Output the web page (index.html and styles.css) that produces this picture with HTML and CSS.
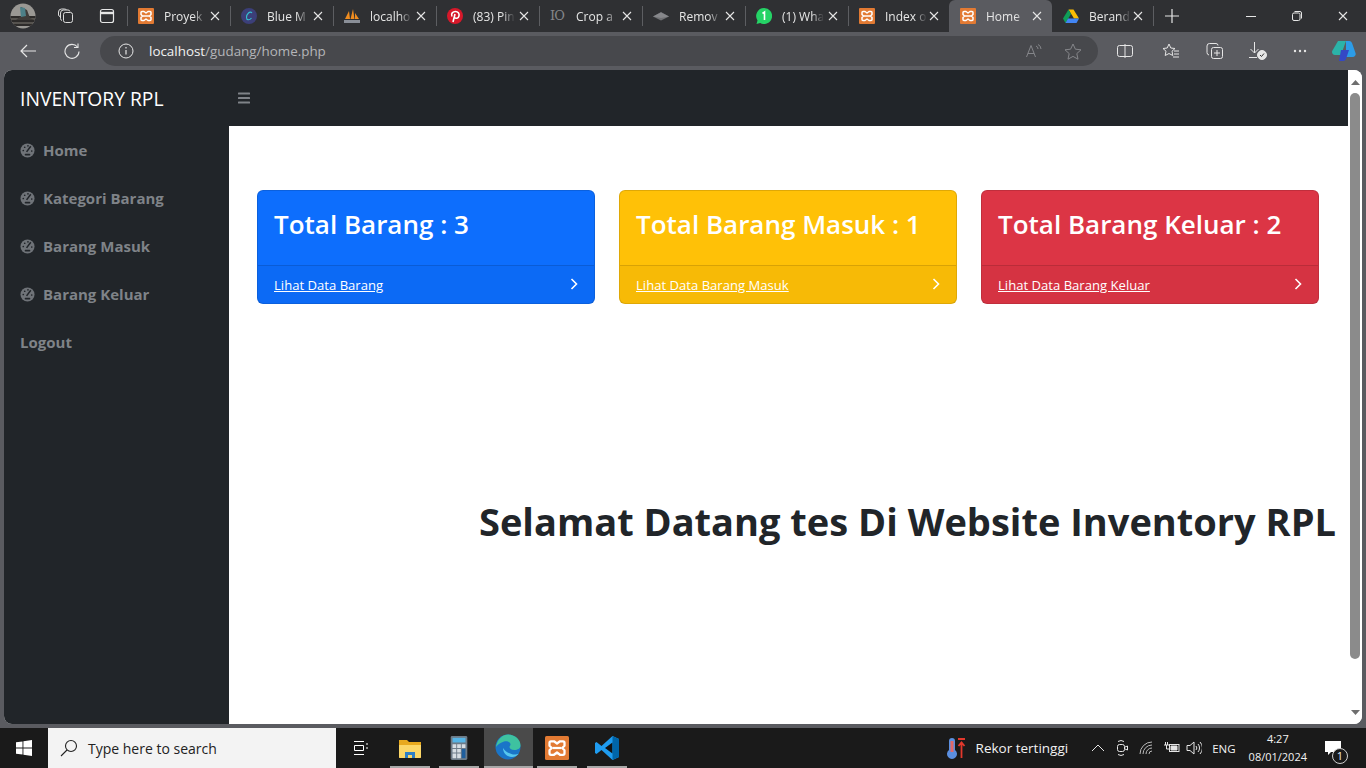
FILE: index.html
```html
<!DOCTYPE html>
<html lang="en">

<head>
    <meta charset="UTF-8" />
    <meta name="viewport" content="width=device-width, initial-scale=1.0" />
    <title>Home</title>

    <link rel="stylesheet" href="styles.css">
</head>

<body>
    <svg class="sprites" width="0" height="0">
        <symbol id="xampp" viewBox="0 0 16 16">
            <rect width="16" height="16" rx="1" fill="#e27a33" />
            <path d="M4 3.500h2L8 5l2-1.500h2a1 1 0 0 1 1 1v2L11.500 8 13 9.500v2a1 1 0 0 1-1 1h-2L8 11l-2 1.500H4a1 1 0 0 1-1-1v-2L4.500 8 3 6.500v-2a1 1 0 0 1 1-1z" fill="none" stroke="#fff" stroke-width="1.500" stroke-linejoin="round" />
            <path d="M5 8h6" stroke="#fff" stroke-width="1.500" />
        </symbol>
        <symbol id="close" viewBox="0 0 10 10">
            <path d="M1 1l8 8M9 1l-8 8" stroke="#e6e6e6" stroke-width="1.100" fill="none" />
        </symbol>
        <symbol id="gauge" viewBox="0 0 16 16">
            <circle cx="8" cy="8" r="7.500" fill="#6f7378" />
            <path d="M7 9.500l4.500-6" stroke="#212529" stroke-width="1.600" />
            <circle cx="3.500" cy="8" r=".9" fill="#212529" />
            <circle cx="5" cy="4.500" r=".9" fill="#212529" />
            <circle cx="8.500" cy="3" r=".9" fill="#212529" />
            <circle cx="12.500" cy="8.500" r=".9" fill="#212529" />
            <rect x="5" y="11.500" width="6" height="1.800" rx=".8" fill="#212529" />
        </symbol>
    </svg>

    <div class="tabstrip">
        <div class="profile">
            <svg width="26" height="26" viewBox="0 0 26 26">
                <clipPath id="avatar"><circle cx="13" cy="13" r="12.500" /></clipPath>
                <g clip-path="url(#avatar)">
                    <rect width="26" height="26" fill="#9a9894" />
                    <path d="M0 13h26v2H0zM0 17h26v2H0zM0 21h26v2H0z" fill="#2d2b2a" />
                    <path d="M0 15h26v2H0zM0 19h26v2H0z" fill="#56534f" />
                    <path d="M11 4l6 3 3 8 4 2H6l5-4z" fill="#3f3c3a" />
                    <path d="M10 4l5 1 1 8-5 1z" fill="#4d8088" />
                </g>
            </svg>
        </div>
        <div class="strip-btn">
            <svg width="18" height="18" viewBox="0 0 18 18" fill="none" stroke="#dcdcdc" stroke-width="1">
                <rect x="6.500" y="5.500" width="9" height="10" rx="2" />
                <path d="M5 13.500A2 2 0 0 1 3.500 11.500V6a3 3 0 0 1 3-3h4.500A2 2 0 0 1 13 4.500" />
                <path d="M3 9.500A2 2 0 0 1 1.500 8V5a3 3 0 0 1 3-3h3A2 2 0 0 1 9.500 3" />
            </svg>
        </div>
        <div class="strip-btn">
            <svg width="16" height="16" viewBox="0 0 16 16" fill="none" stroke="#e6e6e6" stroke-width="1.200">
                <rect x="1.500" y="1.500" width="13" height="13" rx="2" />
                <path d="M1.500 5h13" stroke-width="2.400" />
            </svg>
        </div>

        <div class="tab">
            <svg class="favicon"><use href="#xampp" /></svg>
            <span class="tab-title">Proyek</span>
            <svg class="tab-close"><use href="#close" /></svg>
        </div>
        <div class="tab">
            <svg class="favicon" viewBox="0 0 16 16">
                <circle cx="8" cy="8" r="8" fill="#3c3f79" />
                <path d="M11 5C9 2.500 5.500 6 5.500 9.500c0 3 3 3 5 .5" fill="none" stroke="#35c3d3" stroke-width="1.100" />
            </svg>
            <span class="tab-title">Blue M</span>
            <svg class="tab-close"><use href="#close" /></svg>
        </div>
        <div class="tab">
            <svg class="favicon" viewBox="0 0 16 16">
                <path d="M1 11L5 3l1 8zM6.500 11L9 1l1.500 10zM11 11l0-6 4 6z" fill="#f08c1f" />
                <path d="M0 12h16v3H0z" fill="#8a8f98" />
            </svg>
            <span class="tab-title">localho</span>
            <svg class="tab-close"><use href="#close" /></svg>
        </div>
        <div class="tab">
            <svg class="favicon" viewBox="0 0 16 16">
                <circle cx="8" cy="8" r="8" fill="#d7182a" />
                <path d="M6 14l2-8M5 8.500C3.500 5.500 6 3.500 8.500 3.500s4 2 3.500 4.300c-.5 2.700-3.500 3.200-4.500 1.500" fill="none" stroke="#fff" stroke-width="1.600" />
            </svg>
            <span class="tab-title">(83) Pin</span>
            <svg class="tab-close"><use href="#close" /></svg>
        </div>
        <div class="tab">
            <span class="favicon favicon-text">IO</span>
            <span class="tab-title">Crop a</span>
            <svg class="tab-close"><use href="#close" /></svg>
        </div>
        <div class="tab">
            <svg class="favicon" viewBox="0 0 16 16">
                <path d="M8 4l8 4.500-8 4-8-4z" fill="#6f7074" />
                <path d="M0 8.500l8-4 8 4-8 1.500z" fill="#86878b" />
            </svg>
            <span class="tab-title">Remov</span>
            <svg class="tab-close"><use href="#close" /></svg>
        </div>
        <div class="tab">
            <svg class="favicon" viewBox="0 0 16 16">
                <path d="M8 0a8 8 0 1 1-3.800 15L.5 16l1-3.600A8 8 0 0 1 8 0z" fill="#25d366" />
                <path d="M6.500 5.500L8.500 4v8" fill="none" stroke="#fff" stroke-width="1.600" />
            </svg>
            <span class="tab-title">(1) Wha</span>
            <svg class="tab-close"><use href="#close" /></svg>
        </div>
        <div class="tab">
            <svg class="favicon"><use href="#xampp" /></svg>
            <span class="tab-title">Index o</span>
            <svg class="tab-close"><use href="#close" /></svg>
        </div>
        <div class="tab tab-active">
            <svg class="favicon"><use href="#xampp" /></svg>
            <span class="tab-title">Home</span>
            <svg class="tab-close"><use href="#close" /></svg>
        </div>
        <div class="tab">
            <svg class="favicon" viewBox="0 0 16 16">
                <path d="M5.500 1.500h5L16 10.500h-5z" fill="#fbbc04" />
                <path d="M5.500 1.500L0 10.500 2.500 15 8 6z" fill="#0f9d58" />
                <path d="M2.500 15h11l2.500-4.500H5z" fill="#4285f4" />
            </svg>
            <span class="tab-title">Berand</span>
            <svg class="tab-close"><use href="#close" /></svg>
        </div>

        <div class="new-tab">
            <svg width="14" height="14" viewBox="0 0 14 14">
                <path d="M7 0v14M0 7h14" stroke="#e6e6e6" stroke-width="1.200" />
            </svg>
        </div>

        <div class="window-btns">
            <svg width="10" height="10" viewBox="0 0 10 10"><path d="M0 5.500h10" stroke="#e6e6e6" /></svg>
            <svg width="10" height="10" viewBox="0 0 10 10" fill="none" stroke="#e6e6e6">
                <rect x=".5" y="2" width="7.500" height="7.500" rx="1.500" />
                <path d="M2.500 .5h5.500a1.500 1.500 0 0 1 1.500 1.500v5.500" />
            </svg>
            <svg width="10" height="10"><use href="#close" /></svg>
        </div>
    </div>

    <div class="toolbar">
        <svg class="tool-back" width="16" height="14" viewBox="0 0 16 14" fill="none" stroke="#e6e6e6" stroke-width="1.200">
            <path d="M16 7H1M7 1L1 7l6 6" />
        </svg>
        <svg class="tool-reload" width="16" height="16" viewBox="0 0 16 16" fill="none" stroke="#e6e6e6" stroke-width="1.100">
            <path d="M13.500 4A7 7 0 1 0 15 8.500" />
            <path d="M14 .5V4.500h-4" />
        </svg>
        <div class="address">
            <svg width="16" height="16" viewBox="0 0 16 16" fill="none" stroke="#e6e6e6">
                <circle cx="8" cy="8" r="7" />
                <path d="M8 7v4.500M8 4v1.500" stroke-width="1.200" />
            </svg>
            <span class="url"><b>localhost</b>/gudang/home.php</span>
            <span class="spacer"></span>
            <svg width="16" height="14" viewBox="0 0 16 14" fill="none" stroke="#85868a" stroke-width="1">
                <path d="M0.500 13L5 1.500 9.500 13M2 9.500h6M10 2a3 3 0 0 1 2 3M12 .5a5 5 0 0 1 3 4.500" />
            </svg>
            <svg class="addr-star" width="18" height="17" viewBox="0 0 18 17" fill="none" stroke="#85868a" stroke-width="1">
                <path d="M9 1l2.400 5.200 5.600.6-4.200 3.800 1.200 5.600L9 13.400 4 16.200l1.200-5.600L1 6.800l5.600-.6z" />
            </svg>
        </div>
        <div class="tool-icons">
            <svg width="16" height="14" viewBox="0 0 16 14" fill="none" stroke="#e6e6e6">
                <rect x=".5" y="1.500" width="15" height="11" rx="2" />
                <path d="M8 0v14" />
            </svg>
            <svg class="tool-fav" width="18" height="16" viewBox="0 0 18 16" fill="none" stroke="#e6e6e6">
                <path d="M7 1l1.800 4 4.200.5-3 2.700.8 4.300L7 10.500 3.200 12.500 4 8.200 1 5.500 5.200 5zM12 8h5M12 11h5M11 14h6" />
            </svg>
            <svg width="18" height="16" viewBox="0 0 18 16" fill="none" stroke="#e6e6e6">
                <rect x="5.500" y="4.500" width="11" height="11" rx="2" />
                <path d="M11 7v6M8 10h6M3 12A2.500 2.500 0 0 1 1 9.500V3a2.500 2.500 0 0 1 2.500-2.500H10A2 2 0 0 1 12 2.500" />
            </svg>
            <svg width="18" height="18" viewBox="0 0 18 18" fill="none" stroke="#e6e6e6">
                <path d="M5.500 0v11M1.500 7l4 4 4-4M0 15.500h8" />
                <circle cx="13" cy="13" r="4.500" fill="#e6e6e6" stroke="#e6e6e6" />
                <path d="M11 13l1.500 1.500 2.500-3" stroke="#333" />
            </svg>
            <svg width="14" height="4" viewBox="0 0 14 4" fill="#e6e6e6">
                <circle cx="2" cy="2" r="1.200" />
                <circle cx="7" cy="2" r="1.200" />
                <circle cx="12" cy="2" r="1.200" />
            </svg>
            <svg width="24" height="22" viewBox="0 0 24 22">
                <path d="M6 1h8l-5 14H3a3 3 0 0 1-2.800-4z" fill="#2bb3a8" />
                <path d="M14 1h3a3 3 0 0 1 3 2l3.500 10a3 3 0 0 1-3 4H14z" fill="#2c9ce8" />
                <path d="M9 10h8l-3 9a3 3 0 0 1-3 2H7z" fill="#3448c5" />
            </svg>
        </div>
    </div>

    <div class="viewport">
        <aside class="sidebar">
            <div class="brand">INVENTORY RPL</div>
            <nav class="side-nav">
                <a href="#"><svg class="nav-icon"><use href="#gauge" /></svg>Home</a>
                <a href="#"><svg class="nav-icon"><use href="#gauge" /></svg>Kategori Barang</a>
                <a href="#"><svg class="nav-icon"><use href="#gauge" /></svg>Barang Masuk</a>
                <a href="#"><svg class="nav-icon"><use href="#gauge" /></svg>Barang Keluar</a>
                <a href="#">Logout</a>
            </nav>
        </aside>

        <div class="page">
            <header class="topbar">
                <svg width="12" height="12" viewBox="0 0 12 12" fill="#7f8388">
                    <rect y="0.500" width="12" height="2" rx=".5" />
                    <rect y="5" width="12" height="2" rx=".5" />
                    <rect y="9.500" width="12" height="2" rx=".5" />
                </svg>
            </header>
            <main class="content">
                <div class="cards">
                    <div class="card card-blue">
                        <div class="card-body">Total Barang : 3</div>
                        <div class="card-footer">
                            <a href="#">Lihat Data Barang</a>
                            <svg width="8" height="12" viewBox="0 0 8 12" fill="none" stroke="#fff" stroke-width="1.600"><path d="M1.500 1l5 5-5 5" /></svg>
                        </div>
                    </div>
                    <div class="card card-yellow">
                        <div class="card-body">Total Barang Masuk : 1</div>
                        <div class="card-footer">
                            <a href="#">Lihat Data Barang Masuk</a>
                            <svg width="8" height="12" viewBox="0 0 8 12" fill="none" stroke="#fff" stroke-width="1.600"><path d="M1.500 1l5 5-5 5" /></svg>
                        </div>
                    </div>
                    <div class="card card-red">
                        <div class="card-body">Total Barang Keluar : 2</div>
                        <div class="card-footer">
                            <a href="#">Lihat Data Barang Keluar</a>
                            <svg width="8" height="12" viewBox="0 0 8 12" fill="none" stroke="#fff" stroke-width="1.600"><path d="M1.500 1l5 5-5 5" /></svg>
                        </div>
                    </div>
                </div>
                <h1 class="welcome">Selamat Datang tes Di Website Inventory RPL</h1>
            </main>
        </div>

        <div class="scrollbar">
            <svg width="9" height="5" viewBox="0 0 9 5" fill="#6e6e6e"><path d="M0 5l4.500-5L9 5z" /></svg>
            <div class="scroll-thumb"></div>
            <svg width="9" height="5" viewBox="0 0 9 5" fill="#6e6e6e"><path d="M0 0l4.500 5L9 0z" /></svg>
        </div>
    </div>

    <footer class="taskbar">
        <div class="start">
            <svg width="16" height="16" viewBox="0 0 16 16" fill="#fff">
                <path d="M0 2.300l6.500-.9v6.200H0zM7.400 1.300L16 0v7.600H7.400zM0 8.500h6.500v6.100L0 13.700zM7.400 8.500H16V16l-8.600-1.300z" />
            </svg>
        </div>
        <div class="search">
            <svg width="18" height="18" viewBox="0 0 18 18" fill="none" stroke="#222" stroke-width="1.100">
                <circle cx="11" cy="7" r="5.500" />
                <path d="M7 11l-6 6" />
            </svg>
            <span>Type here to search</span>
        </div>
        <div class="task-apps">
            <div class="task-app">
                <svg width="16" height="16" viewBox="0 0 16 16" fill="none" stroke="#fff">
                    <path d="M1 1.500h10M1 14.500h10M1.500 5.500h9v5h-9zM14 3v2M14 7v2" />
                </svg>
            </div>
            <div class="task-app task-open">
                <svg width="24" height="22" viewBox="0 0 24 22">
                    <path d="M1 3h8l2 2h12v15a1 1 0 0 1-1 1H2a1 1 0 0 1-1-1z" fill="#e8a91e" />
                    <path d="M1 8h22v12a1 1 0 0 1-1 1H2a1 1 0 0 1-1-1z" fill="#fcd768" />
                    <path d="M7 21v-6h10v6h-3v-3h-4v3z" fill="#2f7fc6" />
                </svg>
            </div>
            <div class="task-app task-open">
                <svg width="18" height="24" viewBox="0 0 18 26">
                    <rect width="18" height="26" rx="1.500" fill="#6d7b88" />
                    <rect x="2" y="2" width="14" height="5" fill="#55b4e6" />
                    <path d="M2 9h4v4H2zM7 9h4v4H7zM12 9h4v4h-4zM2 14h4v4H2zM7 14h4v4H7zM2 19h4v5H2zM7 19h4v5H7z" fill="#d6dde3" />
                    <path d="M12 14h4v10h-4z" fill="#1f5f9e" />
                </svg>
            </div>
            <div class="task-app task-current">
                <svg width="26" height="26" viewBox="0 0 26 26">
                    <circle cx="13" cy="13" r="12.500" fill="#1a75c8" />
                    <path d="M1 13C2 5 8 .5 13 .5c7 0 12.500 5 12.500 11 0 3-3 4.500-6 4.500-3.500 0-5-1.500-5-3 0-1 1-1.500 1-2.500C15.500 8 12 6.500 9 7.500 4.500 9 2.500 11 1 13z" fill="#3ec2a0" />
                    <path d="M8 14c0 5 4 9 9 9 2.500 0 5-1 7-3.500-2 1-5 1.500-7.500.5C12 18.500 10 17 8 14z" fill="#56c7ee" />
                </svg>
            </div>
            <div class="task-app task-open">
                <svg width="24" height="24"><use href="#xampp" /></svg>
            </div>
            <div class="task-app task-open">
                <svg width="26" height="26" viewBox="0 0 26 26">
                    <path d="M18.500 1L25 4v18l-6.500 3-11-10-5 4L1 18v-10l1.500-1 5 4z" fill="#1f9cf0" />
                    <path d="M18.500 7.500v11L11 13z" fill="#111" />
                    <path d="M18.500 1L25 4v18l-6.500 3z" fill="#0065a9" />
                </svg>
            </div>
        </div>

        <span class="spacer"></span>

        <div class="weather">
            <svg width="20" height="24" viewBox="0 0 20 24">
                <path d="M3 5a3 3 0 0 1 6 0v9a5 5 0 1 1-6 0z" fill="#5b8fe0" />
                <path d="M4.500 5h3v11h-3z" fill="#e0686a" />
                <path d="M12 3h7M15.500 7v15M12.500 10l3-3.500 3 3.500" stroke="#e2382c" stroke-width="1.800" fill="none" />
            </svg>
            <span>Rekor tertinggi</span>
        </div>
        <div class="tray">
            <svg width="14" height="8" viewBox="0 0 14 8" fill="none" stroke="#e6e6e6"><path d="M1 7l6-6 6 6" /></svg>
            <svg width="12" height="18" viewBox="0 0 12 18" fill="none" stroke="#e6e6e6">
                <rect x="1.500" y="5.500" width="7" height="7" rx="2" />
                <path d="M2 2.500Q5 .5 8 2.500M2 15.500Q5 17.500 8 15.500M9 8l2.500-1v4L9 10" />
            </svg>
            <svg width="14" height="14" viewBox="0 0 14 14" fill="none" stroke="#bbb">
                <path d="M1 13A12 12 0 0 1 13 1M4 13A9 9 0 0 1 13 4M7 13A6 6 0 0 1 13 7M10 13A3 3 0 0 1 13 10" />
            </svg>
            <svg width="16" height="12" viewBox="0 0 16 12" fill="none" stroke="#e6e6e6">
                <rect x="5.500" y="2.500" width="9.500" height="7" />
                <path d="M7 4h6v4H7z" fill="#e6e6e6" />
                <path d="M0 3h5M1.500 0v3M3.500 0v3M2.500 3v4h3" />
            </svg>
            <svg class="tray-volume" width="16" height="14" viewBox="0 0 16 14" fill="none" stroke="#e6e6e6">
                <path d="M1 4.500h3L8 1v12L4 9.500H1zM10 5a3 3 0 0 1 0 4M12 3a6 6 0 0 1 0 8M14 1a8.500 8.500 0 0 1 0 12" />
            </svg>
        </div>
        <span class="lang">ENG</span>
        <div class="clock">
            <span>4:27</span>
            <span>08/01/2024</span>
        </div>
        <div class="notify">
            <svg width="16" height="15" viewBox="0 0 16 15" fill="#fff"><path d="M0 0h16v11H6l-3 3v-3H0z" /></svg>
            <span class="notify-badge">1</span>
        </div>
    </footer>
</body>

</html>
```

FILE: styles.css
```css
* {
    box-sizing: border-box;
}

html,
body {
    height: 100%;
}

body {
    margin: 0;
    height: 768px;
    overflow: hidden;
    display: flex;
    flex-direction: column;
    font-family: "Open Sans", sans-serif;
    background-color: #5a5b60;
}

.sprites {
    position: absolute;
}

.spacer {
    flex: 1;
}

/* browser tabs */
.tabstrip {
    height: 32px;
    display: flex;
    align-items: center;
    background-color: #2f3033;
    color: #e6e6e6;
    font-size: 12px;
}

.profile {
    width: 45px;
    display: flex;
    justify-content: center;
}

.strip-btn {
    width: 41px;
    display: flex;
    justify-content: center;
}

.tab {
    width: 103px;
    height: 32px;
    padding: 0 10px 0 11px;
    display: flex;
    align-items: center;
    position: relative;
}

.tab:has(+ .tab-active),
.tab-active+.tab {
    width: 101px;
}

.tab::before {
    content: "";
    position: absolute;
    left: 0;
    top: 6px;
    height: 20px;
    width: 1px;
    background-color: #5d5e62;
}

.tab-active {
    background-color: #5a5b60;
    border-radius: 6px 6px 0 0;
}

.tab-active::before,
.tab-active+.tab::before {
    display: none;
}

.favicon {
    width: 16px;
    height: 16px;
    flex-shrink: 0;
}

.favicon-text {
    color: #85868a;
    font-family: "DejaVu Serif", serif;
    font-size: 13px;
    line-height: 16px;
    letter-spacing: -1px;
}

.tab-title {
    width: 42px;
    margin-left: 10px;
    white-space: nowrap;
    overflow: hidden;
    -webkit-mask-image: linear-gradient(to right, #000 70%, transparent);
    mask-image: linear-gradient(to right, #000 70%, transparent);
}

.tab-close {
    width: 10px;
    height: 10px;
    margin-left: auto;
}

.new-tab {
    width: 37px;
    height: 20px;
    border-left: 1px solid #5d5e62;
    display: flex;
    align-items: center;
    justify-content: center;
}

.window-btns {
    margin-left: auto;
    display: flex;
    gap: 36px;
    padding-right: 18px;
}

/* address bar */
.toolbar {
    height: 38px;
    padding: 4px 0;
    display: flex;
    align-items: center;
    background-color: #5a5b60;
}

.tool-back {
    margin-left: 20px;
}

.tool-reload {
    margin-left: 28px;
}

.address {
    width: 998px;
    height: 30px;
    margin-left: 20px;
    padding: 0 16px 0 18px;
    display: flex;
    align-items: center;
    gap: 13px;
    border-radius: 15px;
    background-color: #47484c;
    font-size: 13.400px;
    color: #b4b5b8;
}

.url {
    margin-left: 2px;
}

.url b {
    font-weight: 400;
    color: #f2f2f2;
}

.addr-star {
    margin-left: 9px;
}

.tool-icons {
    flex: 1;
    padding: 0 10px 0 19px;
    display: flex;
    align-items: center;
    justify-content: space-between;
}

.tool-fav {
    margin-left: 4px;
}

/* page */
.viewport {
    height: 654px;
    margin: 0 4px;
    display: flex;
    border-radius: 8px;
    overflow: hidden;
    background-color: #fff;
}

.sidebar {
    width: 225px;
    flex-shrink: 0;
    background-color: #212529;
}

.brand {
    height: 56px;
    padding-left: 16px;
    display: flex;
    align-items: center;
    font-size: 19.300px;
    color: #fff;
}

.side-nav {
    display: flex;
    flex-direction: column;
}

.side-nav a {
    height: 48px;
    padding-left: 16px;
    display: flex;
    align-items: center;
    color: #7f8388;
    font-size: 15px;
    font-weight: 700;
    text-decoration: none;
}

.nav-icon {
    width: 15px;
    height: 15px;
    margin-right: 8px;
}

.page {
    flex: 1;
    min-width: 0;
    display: flex;
    flex-direction: column;
}

.topbar {
    height: 56px;
    padding-left: 9px;
    display: flex;
    align-items: center;
    background-color: #212529;
}

.content {
    flex: 1;
    padding: 64px 12px 0 28px;
    background-color: #fff;
}

.cards {
    display: flex;
    gap: 24px;
}

.card {
    width: 338px;
    height: 114px;
    display: flex;
    flex-direction: column;
    border: 1px solid rgba(0, 0, 0, 0.125);
    border-radius: 6px;
    color: #fff;
}

.card-blue {
    background-color: #0d6efd;
}

.card-yellow {
    background-color: #ffc107;
}

.card-red {
    background-color: #dc3545;
}

.card-body {
    height: 74px;
    padding: 0 0 8px 16px;
    display: flex;
    align-items: center;
    font-size: 26px;
    font-weight: 600;
}

.card-footer {
    flex: 1;
    padding: 0 16px;
    display: flex;
    align-items: center;
    justify-content: space-between;
    background-color: rgba(0, 0, 0, 0.03);
    border-top: 1px solid rgba(0, 0, 0, 0.125);
    font-size: 13.100px;
}

.card-footer a {
    color: #fff;
}

.card-footer svg {
    margin-bottom: 2px;
}

.welcome {
    margin: 193px 0 0;
    text-align: right;
    white-space: nowrap;
    font-size: 38px;
    font-weight: 700;
    line-height: 48px;
    color: #212529;
}

.scrollbar {
    width: 14px;
    padding: 10px 0 9px;
    flex-shrink: 0;
    display: flex;
    flex-direction: column;
    align-items: center;
    justify-content: space-between;
    background-color: #fff;
}

.scroll-thumb {
    width: 10px;
    flex: 1;
    margin: 8px 0 51px;
    border-radius: 5px;
    background-color: #8b8b8b;
}

/* windows taskbar */
.taskbar {
    height: 40px;
    margin-top: 4px;
    display: flex;
    align-items: center;
    background-color: #1a1a1a;
    color: #f2f2f2;
    font-size: 14px;
}

.start {
    width: 48px;
    display: flex;
    justify-content: center;
}

.search {
    width: 288px;
    height: 40px;
    padding-left: 12px;
    display: flex;
    align-items: center;
    gap: 10px;
    background-color: #f3f3f3;
    color: #222;
}

.task-apps {
    display: flex;
}

.task-app {
    width: 49.200px;
    height: 40px;
    display: flex;
    align-items: center;
    justify-content: center;
}

.task-open {
    background: linear-gradient(#a8a8a8, #a8a8a8) center bottom / 40px 2px no-repeat;
}

.task-current {
    background-color: #4a4a4a;
    border-bottom: 2px solid #a8a8a8;
}

.weather {
    display: flex;
    align-items: center;
    gap: 10px;
    margin-right: 23px;
    font-size: 13.500px;
}

.tray {
    display: flex;
    align-items: center;
    gap: 11px;
    margin-right: 10px;
}

.tray-volume {
    margin-left: -5px;
}

.lang {
    font-size: 11.500px;
    margin-right: 13px;
}

.clock {
    display: flex;
    flex-direction: column;
    align-items: center;
    font-size: 11px;
    line-height: 18px;
    margin-right: 18px;
}

.notify {
    width: 41px;
    height: 40px;
    position: relative;
    display: flex;
    align-items: center;
}

.notify-badge {
    position: absolute;
    left: 7px;
    top: 20px;
    width: 16px;
    height: 16px;
    border-radius: 50%;
    border: 1px solid #d0d0d0;
    background-color: #1a1a1a;
    font-size: 11px;
    line-height: 14px;
    text-align: center;
}
```
